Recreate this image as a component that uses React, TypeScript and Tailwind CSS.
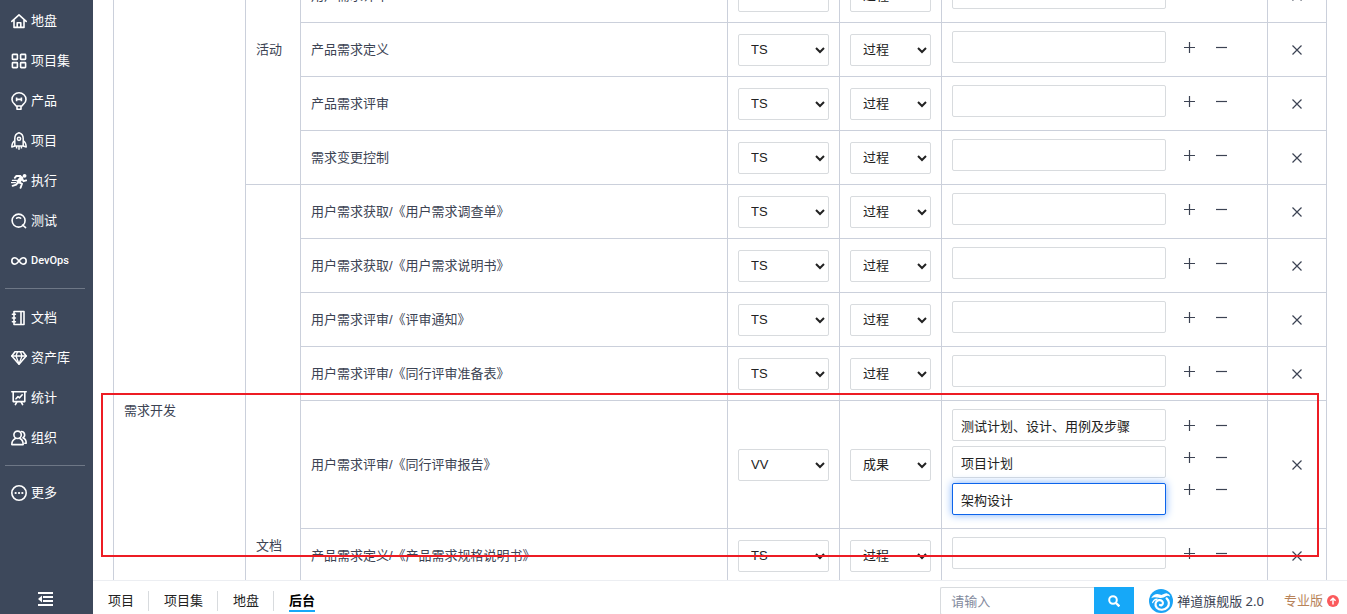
import React, { useLayoutEffect, useRef } from 'react';
import { clsx } from 'clsx';

interface NavItem {
  label: string;
  icon: React.ReactNode;
  latin?: boolean;
}

interface TailorRow {
  name: string;
  area?: string;
  kind?: string;
  outputs?: string[];
}

function Icon({ children }: { children: React.ReactNode }) {
  return (
    <svg
      viewBox="0 0 16 16"
      className="h-4 w-4 shrink-0"
      fill="none"
      stroke="currentColor"
      strokeWidth="1.6"
      strokeLinecap="round"
      strokeLinejoin="round"
      aria-hidden="true"
    >
      {children}
    </svg>
  );
}

const mainNav: NavItem[] = [
  {
    label: '地盘',
    icon: (
      <Icon>
        <path d="M0.8 8.4 8 1.8l7.2 6.6M3 7v7.4h10V7" />
        <path d="M6.2 14.2V9.8h3.6v4.4" />
      </Icon>
    ),
  },
  {
    label: '项目集',
    icon: (
      <Icon>
        <rect x="1.4" y="1.4" width="5" height="5" rx="0.6" />
        <rect x="9.6" y="1.4" width="5" height="5" rx="0.6" />
        <rect x="1.4" y="9.6" width="5" height="5" rx="0.6" />
        <rect x="9.6" y="9.6" width="5" height="5" rx="0.6" />
      </Icon>
    ),
  },
  {
    label: '产品',
    icon: (
      <svg
        viewBox="0 0 16 18"
        className="-my-px h-[18px] w-4 shrink-0"
        fill="none"
        stroke="currentColor"
        strokeWidth="1.6"
        strokeLinejoin="round"
        aria-hidden="true"
      >
        <path d="M5 14C4.800 12.600 1 11.400 1 7.400a7 6.600 0 0 1 14 0c0 4-3.800 5.200-4 6.600z" />
        <path d="M6 14v3.200h4V14" />
        <path d="M5.600 5.600v3.600M10.400 5.600v3.600M5.600 7.400h4.800" />
      </svg>
    ),
  },
  {
    label: '项目',
    icon: (
      <svg
        viewBox="0 0 16 18"
        className="-my-px h-[18px] w-4 shrink-0"
        fill="none"
        stroke="currentColor"
        strokeWidth="1.5"
        strokeLinejoin="round"
        aria-hidden="true"
      >
        <path d="M3.800 14V6.400C3.800 3.800 5.600 1.600 8 .8c2.400.8 4.200 3 4.200 5.600V14z" />
        <path d="M3.800 8.600C1.800 9.800.9 11.600.8 15l3-1M12.200 8.600c2 1.200 2.900 3 3 6.400l-3-1" />
        <circle cx="8" cy="6.800" r="1.600" />
        <path d="M5.600 14v2.600M8 14v3.800M10.400 14v2.600" />
      </svg>
    ),
  },
  {
    label: '执行',
    icon: (
      <Icon>
        <circle cx="13.600" cy="2.800" r="1.900" fill="currentColor" stroke="none" />
        <path d="m10.400 5-2.800 3.400" strokeWidth="4" />
        <path d="M9.400 3H5.400L3.800 4.800M11.400 6.400l1.200 1.800 2.600-.8M8.400 9.400l2.600 1.400-1.400 4" strokeWidth="1.900" />
        <path d="m7 9.400-1.800 2.200-3.600 1.200" strokeWidth="1.900" />
        <path d="M1.400 7.400h4M.4 9.600h4.200" strokeWidth="1.200" />
      </Icon>
    ),
  },
  {
    label: '测试',
    icon: (
      <Icon>
        <circle cx="7.600" cy="7.600" r="6.500" />
        <path d="m11.600 12 3 2.600M5.600 5.200c1.300-.9 2.800-.9 4 0" />
      </Icon>
    ),
  },
  {
    label: 'DevOps',
    latin: true,
    icon: (
      <Icon>
        <path
          d="M8 8C6.600 6.200 5.600 4.800 4 4.800a3.200 3.200 0 0 0 0 6.400c1.600 0 2.600-1.400 4-3.200s2.400-3.200 4-3.200a3.200 3.200 0 0 1 0 6.400c-1.600 0-2.600-1.400-4-3.200z"
        />
      </Icon>
    ),
  },
];

const assetNav: NavItem[] = [
  {
    label: '文档',
    icon: (
      <Icon>
        <path d="M3 1.500h7v13H3zM10 1.500h3v13h-3" />
        <path d="M1.400 4.200h3M1.400 8h3M1.400 11.800h3" />
      </Icon>
    ),
  },
  {
    label: '资产库',
    icon: (
      <Icon>
        <path d="M4 1.800h8L15.200 6 8 14.200.8 6z" />
        <path d="M.8 6h14.400M5 6l3 8 3-8-1.400-4M5 6l1.400-4" strokeWidth="1.300" />
      </Icon>
    ),
  },
  {
    label: '统计',
    icon: (
      <Icon>
        <path d="M.8 1.800h14.400M2.200 1.800v9.800h11.600V1.800" />
        <path d="m5 8.800 2-2.200 1.600 1.200 2.600-3M5.800 12l-1.400 2.600M10.200 12l1.400 2.600" />
      </Icon>
    ),
  },
  {
    label: '组织',
    icon: (
      <Icon>
        <circle cx="6.600" cy="4.800" r="3.700" />
        <path d="M.8 14.600c0-3.400 1.400-5.200 3.600-6.200M8.800 8.400c2.200 1 3.400 2.800 3.400 6.200H.8" />
        <path d="M10.400 1.500a3.400 3.400 0 0 1 1.600 6.300c2.200 1 3.200 2.900 3.200 5.400h-1.400" />
      </Icon>
    ),
  },
];

const moreNav: NavItem[] = [
  {
    label: '更多',
    icon: (
      <Icon>
        <circle cx="8" cy="8" r="7.200" />
        <path d="M4.600 8h.1M8 8h.1M11.300 8h.1" strokeWidth="2.200" />
      </Icon>
    ),
  },
];

const activityRows: TailorRow[] = [
  { name: '用户需求获取' },
  { name: '用户需求评审' },
  { name: '产品需求定义' },
  { name: '产品需求评审' },
  { name: '需求变更控制' },
];

const documentRows: TailorRow[] = [
  { name: '用户需求获取/《用户需求调查单》' },
  { name: '用户需求获取/《用户需求说明书》' },
  { name: '用户需求评审/《评审通知》' },
  { name: '用户需求评审/《同行评审准备表》' },
  {
    name: '用户需求评审/《同行评审报告》',
    area: 'VV',
    kind: '成果',
    outputs: ['测试计划、设计、用例及步骤', '项目计划', '架构设计'],
  },
  { name: '产品需求定义/《产品需求规格说明书》' },
  { name: '产品需求评审/《评审通知》' },
  { name: '产品需求评审/《同行评审准备表》' },
  { name: '产品需求评审/《同行评审报告》' },
  { name: '需求变更控制/《需求变更申请》' },
  { name: '需求变更控制/《需求跟踪矩阵》' },
  { name: '需求变更控制/《变更记录》' },
];

const groups = [
  { type: '活动', rows: activityRows },
  { type: '文档', rows: documentRows },
];

const footerTabs = ['项目', '项目集', '地盘', '后台'];

function NavList({ items, className }: { items: NavItem[]; className?: string }) {
  return (
    <ul className={className}>
      {items.map((item) => (
        <li key={item.label}>
          <a href="#" className="flex h-10 items-center gap-1 pl-[11px] text-white">
            {item.icon}
            <span className={clsx(item.latin && 'font-[Roboto,sans-serif] text-[11px] font-medium')}>
              {item.label}
            </span>
          </a>
        </li>
      ))}
    </ul>
  );
}

function IconButton({ label, d }: { label: string; d: string }) {
  return (
    <button type="button" aria-label={label} className="flex h-8 w-8 items-center justify-center">
      <svg viewBox="0 0 12 12" className="h-3 w-3" fill="none" stroke="currentColor" strokeWidth="1.2" aria-hidden="true">
        <path d={d} />
      </svg>
    </button>
  );
}

function Select({ label, value, options }: { label: string; value: string; options: string[] }) {
  return (
    <select
      aria-label={label}
      defaultValue={value}
      className="block h-8 w-full rounded-xs border border-[#d8dbde] bg-white px-2 text-[#222222]"
    >
      {options.map((option) => (
        <option key={option}>{option}</option>
      ))}
    </select>
  );
}

function RowCells({ row }: { row: TailorRow }) {
  const outputs = row.outputs ?? [''];

  return (
    <>
      <td className="border border-[#cbd0db] px-[10px]">{row.name}</td>
      <td className="border border-[#cbd0db] px-[10px]">
        <Select label={`${row.name} 过程域`} value={row.area ?? 'TS'} options={['TS', 'VV']} />
      </td>
      <td className="border border-[#cbd0db] px-[10px]">
        <Select label={`${row.name} 类型`} value={row.kind ?? '过程'} options={['过程', '成果']} />
      </td>
      <td className="border border-[#cbd0db] px-[10px] py-2">
        <div className="flex gap-[7px]">
          <div className="w-[214px]">
            {outputs.map((output, index) => (
              <input
                key={index}
                type="text"
                aria-label={`${row.name} 输出 ${index + 1}`}
                defaultValue={output}
                className={clsx(
                  'mb-[5px] block h-8 w-full rounded-xs border bg-white px-2 text-[#222222]',
                  outputs.length > 1 && index === outputs.length - 1
                    ? 'border-[#0c64eb] shadow-[0_0_8px_#7db0fa]'
                    : 'border-[#d8dbde]'
                )}
              />
            ))}
          </div>
          <div>
            {outputs.map((_, index) => (
              <div key={index} className="flex">
                <IconButton label="添加" d="M6.500 1v11M1 6.500h11" />
                <IconButton label="删除" d="M1 6.500h11" />
              </div>
            ))}
          </div>
        </div>
      </td>
      <td className="border border-[#cbd0db]">
        <div className="flex justify-center">
          <IconButton label="移除" d="m1.500 1.500 9 9M10.500 1.500l-9 9" />
        </div>
      </td>
    </>
  );
}

export default function App() {
  const paneRef = useRef<HTMLElement>(null);
  const total = groups.reduce((sum, group) => sum + group.rows.length, 0);

  useLayoutEffect(() => {
    if (paneRef.current) paneRef.current.scrollTop = 86;
  }, []);

  return (
    <div className="flex h-screen overflow-hidden bg-white font-['Liberation_Sans','Noto_Sans_CJK_SC',sans-serif] text-[13px] leading-5 text-[#3c4353]">
      {/* Sidebar */}
      <nav className="flex w-[93px] shrink-0 flex-col bg-[#3d485b] pt-px">
        <NavList items={mainNav} className="pb-[7px]" />
        <hr className="ml-[5px] mr-2 border-[#6e7786]" />
        <NavList items={assetNav} className="pt-[9px] pb-[7px]" />
        <hr className="ml-[5px] mr-2 border-[#6e7786]" />
        <NavList items={moreNav} className="pt-[7px]" />
        <button
          type="button"
          aria-label="收起"
          className="mt-auto flex h-[30px] items-center justify-center pr-1 text-white"
        >
          <svg viewBox="0 0 16 16" className="h-4 w-4" aria-hidden="true">
            <path d="M1 2h15M6 6h10M6 10h10M1 14h15" stroke="currentColor" strokeWidth="2" />
            <path d="M5 4.500v7L1 8z" fill="currentColor" />
          </svg>
        </button>
      </nav>

      <div className="flex min-w-0 flex-1 flex-col">
        {/* Tailoring table */}
        <main ref={paneRef} className="min-h-0 flex-1 overflow-y-auto [scrollbar-width:none]">
          <div className="relative px-5">
            <table className="w-full table-fixed border-collapse">
              <colgroup>
                <col className="w-[132px]" />
                <col className="w-[55px]" />
                <col />
                <col className="w-[112px]" />
                <col className="w-[102px]" />
                <col className="w-[326px]" />
                <col className="w-[59px]" />
              </colgroup>
              <tbody>
                {groups.map((group, groupIndex) =>
                  group.rows.map((row, rowIndex) => (
                    <tr key={row.name}>
                      {groupIndex === 0 && rowIndex === 0 && (
                        <td rowSpan={total} className="border border-[#cbd0db] px-[10px]">
                          需求开发
                        </td>
                      )}
                      {rowIndex === 0 && (
                        <td rowSpan={group.rows.length} className="border border-[#cbd0db] px-[10px]">
                          {group.type}
                        </td>
                      )}
                      <RowCells row={row} />
                    </tr>
                  ))
                )}
              </tbody>
            </table>

            {/* Highlight over the review report row */}
            <div className="pointer-events-none absolute left-2 right-7 top-[479px] h-[164px] border-2 border-[#ed1c24]" />
          </div>
        </main>

        {/* Footer */}
        <footer className="h-[34px] shrink-0 overflow-hidden border-t border-[#eceef2]">
          <div className="flex h-10 items-center justify-between">
            <ul className="flex text-[#222222]">
              {footerTabs.map((tab, index) => {
                const active = index === footerTabs.length - 1;
                return (
                  <li key={tab} className={clsx('pl-[15px] pr-[14px]', !active && 'border-r border-[#d8dbde]')}>
                    <a
                      href="#"
                      className={clsx('relative block', active && 'font-bold text-black')}
                    >
                      {tab}
                      {active && <span className="absolute inset-x-0 -bottom-px h-0.5 bg-[#16a8f8]" />}
                    </a>
                  </li>
                );
              })}
            </ul>

            <div className="flex items-center pr-2">
              <form className="flex">
                <input
                  type="text"
                  aria-label="搜索"
                  placeholder="请输入"
                  className="h-7 w-[154px] rounded-l-xs border border-r-0 border-[#d8dbde] px-[10px] placeholder:text-[#838a9d]"
                />
                <button
                  type="button"
                  aria-label="搜索"
                  className="flex h-7 w-10 items-center justify-center bg-[#16a8f8] text-white"
                >
                  <svg viewBox="0 0 12 12" className="h-3 w-3" fill="none" stroke="currentColor" strokeWidth="2" aria-hidden="true">
                    <circle cx="5" cy="5" r="3.800" />
                    <path d="m8 8 3.400 3.400" strokeWidth="2.400" />
                  </svg>
                </button>
              </form>
              <a href="#" className="ml-[15px] flex items-center gap-1 font-['Noto_Sans','Noto_Sans_CJK_SC',sans-serif]">
                <svg viewBox="0 0 24 24" className="h-6 w-6" aria-hidden="true">
                  <circle cx="12" cy="12" r="12" fill="#1aa3f5" />
                  <path
                    d="M2.200 9.200C4.400 5 8 4.200 11 5.600c2.600 1.200 4.200-1.600 7-1.200 2 .3 3.200 1.800 3 3.400-.8-1-2.200-1.400-3.600-.8-2.400 1.200-4.200 2.600-7.400 1.800C7 8 4.400 7.800 2.200 9.200z"
                    fill="#ffffff"
                  />
                  <path
                    d="M17.600 9.400c2.800 2.400 3 6.200.8 8.800-2.800 3.200-8 3.400-10.600.6-2.400-2.800-1.400-6.800 1.800-7.600 2.800-.6 4.800 1.600 4.200 3.600-.4 1.400-1.800 1.800-2.800 1.200"
                    fill="none"
                    stroke="#ffffff"
                    strokeWidth="2.200"
                    strokeLinecap="round"
                  />
                  <path d="M3.600 13.600c.8-2 2.400-3.200 4.600-3.400" fill="none" stroke="#ffffff" strokeWidth="1.200" strokeLinecap="round" />
                </svg>
                禅道旗舰版 2.0
              </a>
              <a href="#" className="ml-5 flex items-center gap-1 text-[#b8835a]">
                专业版
                <svg viewBox="0 0 12 12" className="h-3 w-3" aria-hidden="true">
                  <circle cx="6" cy="6" r="6" fill="#fb5a5c" />
                  <path d="M6 9.400V3.600M3.400 5.800 6 3.200l2.600 2.600" fill="none" stroke="#ffffff" strokeWidth="1.500" />
                </svg>
              </a>
            </div>
          </div>
        </footer>
      </div>
    </div>
  );
}
